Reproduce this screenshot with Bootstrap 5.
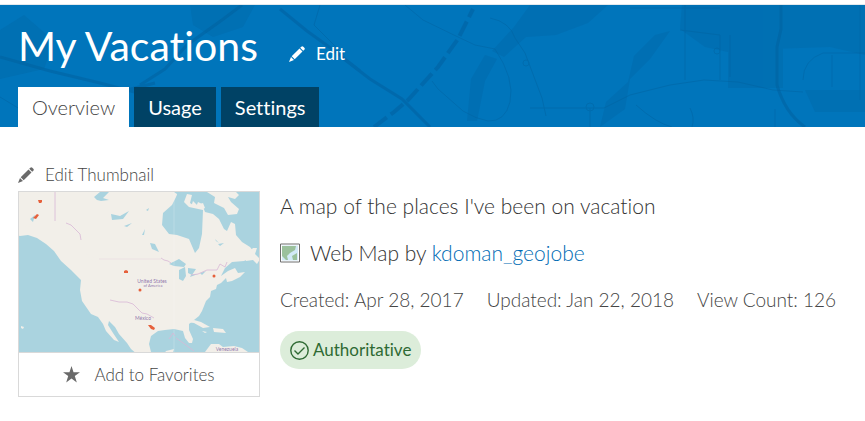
<!DOCTYPE html>
<html lang="en">
<head>
<meta charset="utf-8">
<meta name="viewport" content="width=device-width, initial-scale=1">
<title>My Vacations</title>
<link href="https://cdn.jsdelivr.net/npm/bootstrap@5.3.0/dist/css/bootstrap.min.css" rel="stylesheet">
<style>
body { font-family: Lato, "Open Sans", sans-serif; font-weight: 300; color: #323232; background: #fff; font-size: 17px; line-height: 24px; }
body, button { font-variant-ligatures: none; }
.item-header { background: #0075bb; border-top: 1px solid #e3e9ed; margin-top: 4px; padding: 16px 18px 0; overflow: hidden; }
.header-art { position: absolute; inset: 0; width: 100%; height: 100%; }
.item-title { font-size: 41px; line-height: 50px; font-weight: 400; }
.title-row { gap: 31px; margin-bottom: 16px; }
.text-action { background: none; border: 0; padding: 0; color: inherit; font-weight: inherit; display: inline-flex; align-items: center; gap: 11px; }
.edit-title { margin-top: 16px; font-weight: 400; }
.item-tabs { gap: 5px; }
.item-tabs .nav-link { font-size: 20px; line-height: 24px; padding: 8px 14px; color: #fff; background: #004265; border: 0; border-radius: 0; }
.item-tabs .nav-link.active { color: #444; background: #fff; }
.item-body { padding: 36px 18px 24px; gap: 20px; }
.thumb-column { width: 242px; color: #444; }
.action-icon { fill: #6a6a6a; }
.thumb-box { border: 1px solid #d9d9d9; }
.favorite { font-size: 17px; height: 44px; gap: 14px; justify-content: center; width: 100%; border-top: 1px solid #d9d9d9; }
.details { padding-top: 31px; font-size: 21px; }
.details p { margin-bottom: 23px; }
.details a { color: #006bb4; }
.byline { gap: 10px; }
.meta { gap: 23px; font-size: 19px; color: #444; margin-bottom: 19px; }
.authority { background: #dcedda; color: #2e6a33; font-size: 17px; font-weight: 400; line-height: 24px; padding: 7px 10px; gap: 4px; }
</style>
</head>
<body>
<header class="item-header position-relative">
  <svg class="header-art" viewBox="0 0 865 122" preserveAspectRatio="xMinYMin slice" fill="none" aria-hidden="true">
    <g fill="#006cae" opacity=".6">
      <path d="M530 0h78l-20 18-32 12-30 2-22 20-12-6 22-24zM682 0h183v50l-35-8-60 2-10 10-55-12-25-18zM728 35h55v48h-55zM805 85h60v22h-50zM190 0h65l-12 22-30 10-20-12zM0 25l24-15 30 26-10 28-44 10z"/>
      <path d="M655 30l15-4-20 28-20 20-5 30-25 18 6-25 22-20 6-26zM485 50l12 4-12 22-8 40-10 0 4-42z"/>
    </g>
    <g stroke="#005f9e" opacity=".5">
      <path stroke-width="3" d="M0 52l50 14 50 12 50 13M55 118l60-30 40-10M140 80l25-16 22-24 35-25 20-15M280 4l27 22 25 18 28 22"/>
      <path stroke-width="3" d="M344 54l26 20 32 20 28 28"/>
      <path stroke-width="4" stroke-dasharray="16 5" d="M374 122l20-15 14-12 30-33 20-28 15-30"/>
      <path stroke-width="3" d="M781 0v24l-4 18v38q8 28 28 42"/>
    </g>
    <g stroke="#00629f" opacity=".45">
      <path d="M405 0l18 15 35 17 17 8 20 4q20 30 15 53-5 20-22 19-12-2-25-10l-25-22-6-8M490 13q20 4 25 20l10 15 17 45 4 18M530 103h74l26-13 40-10 34-5 34 2 35 8 30 2M685 0v75M680 25l40 5v45M730 30v42M803 75q0-20 20-27h42M832 50v32M860 0v95M590 103v19M690 103q5 10 2 19M636 100q20 18 36 22M0 92l33 20 60 4M320 0l-6 20 30 30M630 3h90M775 122v-18"/>
      <circle cx="526" cy="58" r="3"/><circle cx="590" cy="102" r="4"/><circle cx="717" cy="46" r="3"/>
    </g>
  </svg>
  <div class="position-relative">
    <div class="title-row d-flex align-items-center text-white">
      <h1 class="item-title mb-0">My Vacations</h1>
      <button type="button" class="text-action edit-title">
        <svg width="16" height="16" viewBox="0 0 16 16" fill="currentColor" aria-hidden="true"><path d="M0 16l2-5 3 3zM2.700 10.300l7.800-7.800 3 3-7.800 7.800zM11.200 1.800l1.100-1.100q1-1 2 0l1 1q1 1 0 2l-1.100 1.100z"/></svg>Edit</button>
    </div>
    <ul class="item-tabs nav" role="tablist">
      <li class="nav-item" role="presentation"><button type="button" role="tab" aria-selected="true" class="nav-link active">Overview</button></li>
      <li class="nav-item" role="presentation"><button type="button" role="tab" aria-selected="false" class="nav-link fw-normal">Usage</button></li>
      <li class="nav-item" role="presentation"><button type="button" role="tab" aria-selected="false" class="nav-link fw-normal">Settings</button></li>
    </ul>
  </div>
</header>
<main class="item-body d-flex align-items-start">
  <section class="thumb-column flex-shrink-0">
    <button type="button" class="text-action mb-1">
      <svg class="action-icon" width="16" height="16" viewBox="0 0 16 16" aria-hidden="true"><path d="M0 16l2-5 3 3zM2.700 10.300l7.800-7.800 3 3-7.800 7.800zM11.200 1.800l1.100-1.100q1-1 2 0l1 1q1 1 0 2l-1.100 1.100z"/></svg>Edit Thumbnail</button>
    <div class="thumb-box">
      <svg class="d-block w-100" viewBox="0 0 240 160" role="img" aria-label="Map of North America">
        <path fill="#aad3df" d="M0 0h240v160H0z"/>
        <g fill="#f2efe9">
          <path d="M0 0H155l3 2-1 10 8-2 3-8 5 1-2 8 6 4 2-5 4 2 3 8 8 2 6 5 5 10 3 2 4-9 4 2 1 11 6 7 8 5 4 5-1 5-9 4-12 1-7 6-4 8 7-5 7-3 3 5 7-1-5 5-8 4-5 1-1-4-5 5-4 2-1 4-5 2-1 6-4 4-4 10-3 5-10 8 0 6 4 9-1 4-3 0-4-5-2-7-9-2-9 1-7 1-7 5-2 8 2 8 4 5 6 1 5-7 8-2-3 10 0 3 9 1 5 9 3 6 6-3 6 3v3h-14l-6-4-5-4-6-6-10-5-9-1-12-6-7-6-4-6-8-9-4-7-6-6-1 4 5 8 6 9-5-2-8-9-3-7-5-7-7-3-9-13-2-11 1-10-10-10-10-9-7-10-8-7-9-6-9-3-8 1-7-2-5 5-4 3-5 2-4 8-6 2z"/>
          <path d="M188 0l8 5-1 6 10 5 4 7 9-1 2-5-8-7-3-5 7 2 4-4-3-3zM174 9l4 4 6-2 2 5-6 3-8-4zM226 64l8-8 4 0-2 6 5 5-3 5-4-4-7 1zM166 130l9-2 7 2 9 5-7 1-9-5zM194 136l10 1 3 4-12-1zM183 139l5 1-2 1zM186 160l6-8 8 0 4 3 11-1 8 2 6 4zM2 134l3 1-1 2-2-1zM67 61l8 5 3 4-7-3zM50 36l8 7 3 7-6-4zM5 35l7-3-4 5-2 2zM154 5l5 3-3 5-5-3z"/>
        </g>
        <g fill="#aad3df">
          <path d="M158 3l12 12 14 3-1 24-3 14-4 5-6-14-12-4-8-1-7-9 1-12 9-8zM150 72l10-5 7 5-2 3-10-1zM160 78l6-3 1 9-3 5-4-2zM169 76l8 1-4 6-4-2zM171 85l8-3-7 1zM181 81l6-2-4 4zM75 5l6-5 9 0-6 6 6 2-8 1-4-1zM92 22l9 2 9-5-6 8-11 1zM105 34l8-3-5 4zM123 43l3-6-1 6zM131 51l5 1 4 8-7-3zM127 18l3-2-1 3zM11 27l5-4-2 7zM199 52l6-1-4 3zM196 47l4 4-3-2z"/>
        </g>
        <path stroke="#fff" stroke-opacity=".2" fill="none" d="M155 0v160"/>
        <g fill="none" stroke="#d8b7d5" stroke-width=".8">
          <path d="M36 0v29M47 31l5 2 5 5 4 4 1 6M142 66l3 2 4 1 3 2M91 108l9 2 8 0 6 2 9 9 5 1 7 4M172 83l7-1 9-4 10 0 3-6 5 3 2-5M150 147l4-6 2 3M157 146l10 7 8 6"/>
          <path stroke-opacity=".3" d="M80 67h62"/>
        </g>
        <g fill="#76569b" fill-opacity=".8" font-size="5" font-weight="400" text-anchor="middle"><text x="133" y="91">United States</text><text x="134" y="95" font-size="4">of America</text><text x="124" y="128">México</text><text x="208" y="159">Venezuela</text></g>
        <g fill="#e6603b"><path d="M19 8h4v2l-1 1h-2zM14 26l4-4 2 1-3 4zM105 79l2-1 2 1v2h-4z"/><circle cx="121" cy="98" r="1.500"/><circle cx="195" cy="84" r="1.500"/><path d="M129 133l3 0 4 3-1 2-3-1z"/></g>
      </svg>
      <button type="button" class="text-action favorite">
        <svg class="action-icon" width="17" height="17" viewBox="0 0 16 16" aria-hidden="true"><path d="M8 0l1.900 5.800H16l-4.900 3.600L13 15.500l-5-3.700-5 3.700 1.900-6.100L0 5.800h6.100z"/></svg>Add to Favorites</button>
    </div>
  </section>
  <section class="details flex-grow-1">
    <p>A map of the places I've been on vacation</p>
    <p class="byline d-flex align-items-center">
      <svg width="20" height="20" viewBox="0 0 20 20" aria-hidden="true"><path d="M.5 1h19v18H.5z" fill="#fff" stroke="#6e6e6e"/><path d="M2 2.500h16v15H2z" fill="#d2e9f7"/><path d="M2 3h14l-1 4-5 3-3 3 1 4H6l-4-4zM12 13l5-3v7h-4z" fill="#9bc19c"/></svg>
      <span>Web Map by <a href="#" class="text-decoration-none">kdoman_geojobe</a></span>
    </p>
    <div class="meta d-flex flex-wrap"><span>Created: Apr 28, 2017</span><span>Updated: Jan 22, 2018</span><span>View Count: 126</span></div>
    <span class="authority rounded-pill d-inline-flex align-items-center">
      <svg width="19" height="19" viewBox="0 0 19 19" fill="none" stroke="currentColor" stroke-width="1.400" aria-hidden="true"><circle cx="9.500" cy="9.500" r="8.700"/><path d="M4.500 9.500l3.500 3.500 6.500-6.500"/></svg>Authoritative</span>
  </section>
</main>
<script src="https://cdn.jsdelivr.net/npm/bootstrap@5.3.0/dist/js/bootstrap.bundle.min.js"></script>
</body>
</html>
